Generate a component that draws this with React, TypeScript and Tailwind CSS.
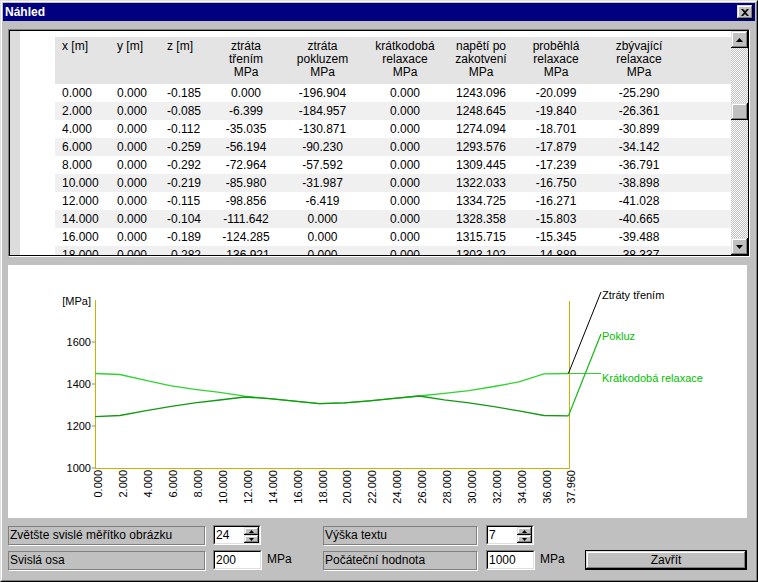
import React from "react";

const headers: string[][] = [
  ["x [m]"],
  ["y [m]"],
  ["z [m]"],
  ["ztráta", "třením", "MPa"],
  ["ztráta", "pokluzem", "MPa"],
  ["krátkodobá", "relaxace", "MPa"],
  ["napětí po", "zakotvení", "MPa"],
  ["proběhlá", "relaxace", "MPa"],
  ["zbývající", "relaxace", "MPa"],
];

const rows: string[][] = [
  ["0.000", "0.000", "-0.185", "0.000", "-196.904", "0.000", "1243.096", "-20.099", "-25.290"],
  ["2.000", "0.000", "-0.085", "-6.399", "-184.957", "0.000", "1248.645", "-19.840", "-26.361"],
  ["4.000", "0.000", "-0.112", "-35.035", "-130.871", "0.000", "1274.094", "-18.701", "-30.899"],
  ["6.000", "0.000", "-0.259", "-56.194", "-90.230", "0.000", "1293.576", "-17.879", "-34.142"],
  ["8.000", "0.000", "-0.292", "-72.964", "-57.592", "0.000", "1309.445", "-17.239", "-36.791"],
  ["10.000", "0.000", "-0.219", "-85.980", "-31.987", "0.000", "1322.033", "-16.750", "-38.898"],
  ["12.000", "0.000", "-0.115", "-98.856", "-6.419", "0.000", "1334.725", "-16.271", "-41.028"],
  ["14.000", "0.000", "-0.104", "-111.642", "0.000", "0.000", "1328.358", "-15.803", "-40.665"],
  ["16.000", "0.000", "-0.189", "-124.285", "0.000", "0.000", "1315.715", "-15.345", "-39.488"],
  ["18.000", "0.000", "-0.282", "-136.921", "0.000", "0.000", "1303.102", "-14.889", "-38.337"],
];

const GRID = "grid grid-cols-[55px_50px_52px_68px_85px_80px_72px_78px_88px]";

const raised =
  "shadow-[inset_-1px_-1px_0_#000,inset_1px_1px_0_#dfdfdf,inset_-2px_-2px_0_#808080,inset_2px_2px_0_#fff]";

function Table() {
  return (
    <div className="mt-[8px] w-[742px] h-[228px] border border-t-[#808080] border-l-[#808080] border-b-white border-r-white">
      <div className="w-full h-full border border-black flex overflow-hidden">
        <div className="w-[10px] h-full bg-[#dcdcdc]" />
        <div className="flex-1 h-full bg-white pl-[35px] pt-[6px] overflow-hidden">
          <div className={`${GRID} bg-[#e4e4e4] h-[47px] pt-[3px] leading-[13px]`}>
            {headers.map((h, i) => (
              <div key={i} className={i < 3 ? "pl-[7px] text-left" : "text-center"}>
                {h.map((l, j) => (
                  <div key={j}>{l}</div>
                ))}
              </div>
            ))}
          </div>
          {rows.map((r, ri) => (
            <div
              key={ri}
              className={`${GRID} h-[18px] items-center ${ri % 2 === 1 ? "bg-[#f0f0f0]" : "bg-white"}`}
            >
              {r.map((c, ci) => (
                <div key={ci} className={ci < 3 ? "pl-[7px] text-left" : "text-center"}>
                  {c}
                </div>
              ))}
            </div>
          ))}
        </div>
        <div className="w-[17px] h-full flex flex-col bg-[repeating-conic-gradient(#c0c0c0_0%_25%,#ffffff_0%_50%)] [background-size:2px_2px]">
          <div className={`w-[17px] h-[17px] bg-[#c0c0c0] ${raised} flex items-center justify-center`}>
            <svg width="7" height="4" viewBox="0 0 7 4">
              <polygon points="3.5,0 7,4 0,4" fill="#000" />
            </svg>
          </div>
          <div className="h-[55px]" />
          <div className={`w-[17px] h-[17px] bg-[#c0c0c0] ${raised}`} />
          <div className="flex-1" />
          <div className={`w-[17px] h-[17px] bg-[#c0c0c0] ${raised} flex items-center justify-center`}>
            <svg width="7" height="4" viewBox="0 0 7 4">
              <polygon points="0,0 7,0 3.5,4" fill="#000" />
            </svg>
          </div>
        </div>
      </div>
    </div>
  );
}

const X = (t: number) => 87 + t * 12.47;
const Y = (v: number) => 203 - (v - 1000) * 0.21;

const lineA: [number, number][] = [
  [0, 1450], [2, 1445], [4, 1418], [6, 1392], [8, 1375], [10, 1360], [12, 1342],
  [14, 1330], [16, 1318], [18, 1306], [20, 1310], [22, 1320], [24, 1332], [26, 1343],
  [28, 1355], [30, 1368], [32, 1388], [34, 1410], [36, 1448], [37.96, 1450],
];
const lineB: [number, number][] = [
  [0, 1245], [2, 1250], [4, 1272], [6, 1292], [8, 1310], [10, 1324], [12, 1338],
  [14, 1330], [16, 1318], [18, 1306], [20, 1310], [22, 1320], [24, 1332], [26, 1343],
  [28, 1325], [30, 1310], [32, 1292], [34, 1272], [36, 1250], [37.96, 1248],
];

const pts = (l: [number, number][]) => l.map(([t, v]) => `${X(t).toFixed(1)},${Y(v).toFixed(1)}`).join(" ");

function Chart() {
  const axis = "#c8b400";
  const xs: number[] = [];
  for (let t = 0; t <= 36; t += 2) xs.push(t);
  xs.push(37.96);
  return (
    <div className="mt-[8px] w-[739px] h-[253px] bg-white">
      <svg width="739" height="253" viewBox="0 0 739 253" fontSize="11" fontFamily="'Liberation Sans', Arial, sans-serif" shapeRendering="auto">
        <text x="83" y="40" textAnchor="end" fill="#000">[MPa]</text>
        {[1000, 1200, 1400, 1600].map((v) => (
          <g key={v}>
            <text x="83" y={Y(v) + 4} textAnchor="end" fill="#000">{v}</text>
            <line x1="84" x2="87" y1={Y(v)} y2={Y(v)} stroke="#888" strokeWidth="1" />
          </g>
        ))}
        <rect x="87" y="35" width="1" height="169" fill={axis} />
        <rect x="87" y="203" width="475" height="1" fill={axis} />
        <rect x="561" y="36" width="1" height="168" fill={axis} />
        {xs.map((t) => (
          <text
            key={t}
            transform={`translate(${(X(t) + 7).toFixed(1)},205) rotate(-90)`}
            textAnchor="end"
            fill="#000"
          >
            {t.toFixed(3)}
          </text>
        ))}
        <polyline points={pts(lineA)} fill="none" stroke="#2fd42f" strokeWidth="1.3" />
        <polyline points={pts(lineB)} fill="none" stroke="#109a10" strokeWidth="1.3" />
        <line x1={X(37.96)} y1={Y(1450)} x2="593" y2={Y(1450)} stroke="#2fd42f" strokeWidth="1.2" />
        <line x1={X(37.96)} y1={Y(1450)} x2="593" y2="27" stroke="#000" strokeWidth="1" />
        <line x1={X(37.96)} y1={Y(1248)} x2="593" y2="69" stroke="#18b818" strokeWidth="1.2" />
        <text x="594" y="34" fill="#000">Ztráty třením</text>
        <text x="594" y="75" fill="#00c000">Pokluz</text>
        <text x="594" y="117" fill="#00c000">Krátkodobá relaxace</text>
      </svg>
    </div>
  );
}

function Label({ text, w }: { text: string; w: string }) {
  return (
    <div className={`${w} h-[19px] border border-[#808080] shadow-[1px_1px_0_#fff] pl-[1px] leading-[16px]`}>
      {text}
    </div>
  );
}

const sunken =
  "border border-t-[#808080] border-l-[#808080] border-b-white border-r-white";

function Input({ value, w, spin }: { value: string; w: string; spin?: boolean }) {
  return (
    <div className={`${w} h-[20px] ${sunken}`}>
      <div className="w-full h-full border border-t-black border-l-black border-b-[#dfdfdf] border-r-[#dfdfdf] bg-white flex">
        <div className="flex-1 pl-[1px] leading-[17px]">{value}</div>
        {spin && (
          <div className="w-[15px] h-full flex flex-col">
            <div className={`flex-1 bg-[#c0c0c0] ${raised} flex items-center justify-center`}>
              <svg width="5" height="3" viewBox="0 0 5 3">
                <polygon points="2.5,0 5,3 0,3" fill="#000" />
              </svg>
            </div>
            <div className={`flex-1 bg-[#c0c0c0] ${raised} flex items-center justify-center`}>
              <svg width="5" height="3" viewBox="0 0 5 3">
                <polygon points="0,0 5,0 2.5,3" fill="#000" />
              </svg>
            </div>
          </div>
        )}
      </div>
    </div>
  );
}

export default function App() {
  return (
    <div className="w-[758px] h-[582px] bg-[#c0c0c0] text-[12px] text-black font-['Liberation_Sans',Arial,sans-serif] border border-t-[#dfdfdf] border-l-[#dfdfdf] border-b-black border-r-black overflow-hidden">
      <div className="w-full h-full border border-t-white border-l-white border-b-[#808080] border-r-[#808080] pt-[1px] px-[1px]">
        <div className="h-[18px] bg-[#000080] flex items-center justify-between pl-[2px] pr-[2px]">
          <span className="text-white font-bold text-[12px]">Náhled</span>
          <div className={`w-[16px] h-[14px] bg-[#c0c0c0] ${raised} flex items-center justify-center`}>
            <svg width="8" height="7" viewBox="0 0 8 7">
              <path d="M0 0 L2 0 L4 2 L6 0 L8 0 L5 3.5 L8 7 L6 7 L4 5 L2 7 L0 7 L3 3.5 Z" fill="#000" />
            </svg>
          </div>
        </div>
        <div className="pl-[5px]">
          <Table />
          <Chart />
          <div className="mt-[7px] flex flex-col gap-[5px]">
            <div className="flex items-center">
              <Label text="Zvětšte svislé měřítko obrázku" w="w-[197px]" />
              <div className="ml-[8px]"><Input value="24" w="w-[48px]" spin /></div>
              <div className="ml-[62px]"><Label text="Výška textu" w="w-[154px]" /></div>
              <div className="ml-[9px]"><Input value="7" w="w-[48px]" spin /></div>
            </div>
            <div className="flex items-center">
              <Label text="Svislá osa" w="w-[197px]" />
              <div className="ml-[8px]"><Input value="200" w="w-[49px]" /></div>
              <div className="ml-[5px] w-[56px] self-start">MPa</div>
              <Label text="Počáteční hodnota" w="w-[154px]" />
              <div className="ml-[9px]"><Input value="1000" w="w-[49px]" /></div>
              <div className="ml-[5px] w-[45px] self-start">MPa</div>
              <div className="w-[162px] h-[20px] border border-black">
                <div className={`w-full h-full bg-[#c0c0c0] ${raised} flex items-center justify-center`}>
                  Zavřít
                </div>
              </div>
            </div>
          </div>
        </div>
      </div>
    </div>
  );
}
